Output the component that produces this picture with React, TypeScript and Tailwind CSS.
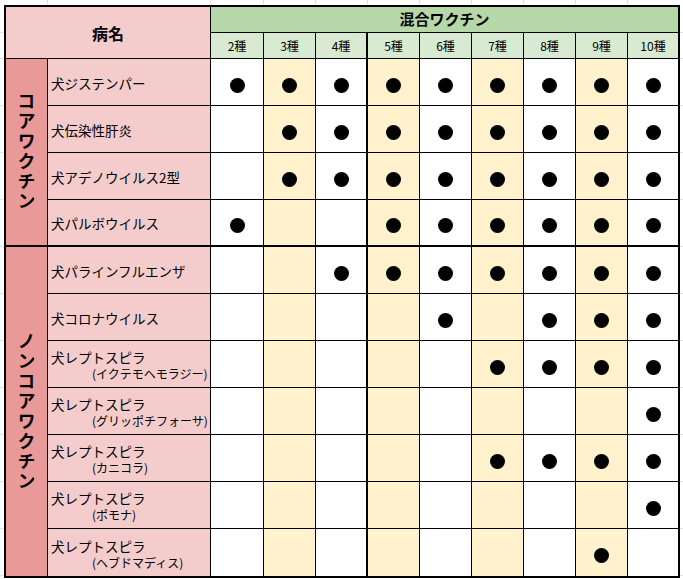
const kinds = ["2種", "3種", "4種", "5種", "6種", "7種", "8種", "9種", "10種"];

type Row = { name: string; sub?: string; dots: number[] };

const coreRows: Row[] = [
  { name: "犬ジステンパー", dots: [0, 1, 2, 3, 4, 5, 6, 7, 8] },
  { name: "犬伝染性肝炎", dots: [1, 2, 3, 4, 5, 6, 7, 8] },
  { name: "犬アデノウイルス2型", dots: [1, 2, 3, 4, 5, 6, 7, 8] },
  { name: "犬パルボウイルス", dots: [0, 3, 4, 5, 6, 7, 8] },
];

const nonCoreRows: Row[] = [
  { name: "犬パラインフルエンザ", dots: [2, 3, 4, 5, 6, 7, 8] },
  { name: "犬コロナウイルス", dots: [4, 6, 7, 8] },
  { name: "犬レプトスピラ", sub: "(イクテモヘモラジー)", dots: [5, 6, 7, 8] },
  { name: "犬レプトスピラ", sub: "(グリッポチフォーサ)", dots: [8] },
  { name: "犬レプトスピラ", sub: "(カニコラ)", dots: [5, 6, 7, 8] },
  { name: "犬レプトスピラ", sub: "(ポモナ)", dots: [8] },
  { name: "犬レプトスピラ", sub: "(ヘブドマディス)", dots: [7] },
];

const stripWidths = [48, 163, 53, 52, 52, 52, 52, 52, 52, 52];
const stripHeights = [28, 26, 47, 47, 47, 47, 47, 47, 47, 47, 47, 47, 47];

function rightBorder(i: number) {
  if (i === 2) return "border-r-2";
  if (i === 8) return "border-r-0";
  return "border-r";
}

function DataRow({ row, thick, last }: { row: Row; thick?: boolean; last?: boolean }) {
  const bottom = thick ? "border-b-2" : last ? "border-b-0" : "border-b";
  return (
    <>
      <div className={`flex flex-col justify-center bg-[#F4CCCC] border-r border-black pl-[3px] pt-[1px] ${bottom}`}>
        <span className="text-[13.5px] leading-[18px] whitespace-nowrap">{row.name}</span>
        {row.sub && <span className="ml-[41px] text-[12px] leading-[15px] whitespace-nowrap">{row.sub}</span>}
      </div>
      {kinds.map((k, i) => (
        <div
          key={k}
          className={`flex items-center justify-center pt-[6px] border-black ${rightBorder(i)} ${bottom} ${
            i % 2 === 1 ? "bg-[#FFF2CC]" : "bg-white"
          }`}
        >
          {row.dots.includes(i) && <div className="w-[15px] h-[15px] rounded-full bg-black" />}
        </div>
      ))}
    </>
  );
}

function VerticalLabel({ text, span, bottom }: { text: string; span: string; bottom: string }) {
  return (
    <div
      className={`flex items-center justify-center bg-[#EA9999] border-r border-black ${span} ${bottom}`}
    >
      <span className="[writing-mode:vertical-rl] font-bold text-[18px] leading-[18px] tracking-[2px]">{text}</span>
    </div>
  );
}

export default function App() {
  return (
    <div className="w-[683px] h-[579px] overflow-hidden bg-white text-black font-['Noto_Sans_CJK_JP',sans-serif]">
      {/* sheet gridlines above the table */}
      <div className="flex h-[5px]">
        {stripWidths.map((w, i) => (
          <div key={i} className="h-full shrink-0 border-r border-[#E1E1E1]" style={{ width: w }} />
        ))}
      </div>

      <div className="flex">
        <div className="flex flex-col w-[4px] shrink-0">
          {stripHeights.map((h, i) => (
            <div key={i} className="shrink-0 border-b border-[#E1E1E1]" style={{ height: h }} />
          ))}
        </div>

        <div className="grid shrink-0 grid-cols-[42px_163px_53px_52px_52px_52px_52px_52px_52px_52px_50px] grid-rows-[26px_26px_repeat(11,47px)] border-2 border-black">
          <div className="col-span-2 row-span-2 flex items-center justify-center bg-[#F4CCCC] border-r border-b border-black font-bold text-[16px]">
            病名
          </div>
          <div className="col-span-9 flex items-center justify-center bg-[#B6D7A8] border-b border-black font-bold text-[15px]">
            混合ワクチン
          </div>
          {kinds.map((k, i) => (
            <div
              key={k}
              className={`flex items-center justify-center bg-[#D9EAD3] border-b border-black text-[12px] ${rightBorder(i)}`}
            >
              {k}
            </div>
          ))}

          <VerticalLabel text="コアワクチン" span="row-span-4" bottom="border-b-2" />
          {coreRows.map((r, i) => (
            <DataRow key={i} row={r} thick={i === coreRows.length - 1} />
          ))}

          <VerticalLabel text="ノンコアワクチン" span="row-span-7" bottom="border-b-0" />
          {nonCoreRows.map((r, i) => (
            <DataRow key={i} row={r} last={i === nonCoreRows.length - 1} />
          ))}
        </div>

        <div className="flex flex-col flex-1">
          {stripHeights.map((h, i) => (
            <div key={i} className="shrink-0 border-b border-[#E1E1E1]" style={{ height: h }} />
          ))}
        </div>
      </div>
    </div>
  );
}
